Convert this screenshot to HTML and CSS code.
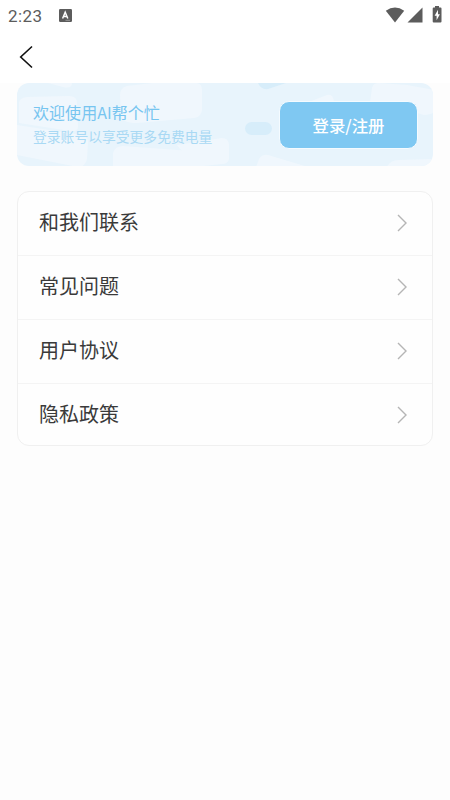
FILE: index.html
```html
<!DOCTYPE html>
<html lang="zh-CN">
<head>
<meta charset="utf-8">
<title>AI帮个忙</title>
<link rel="stylesheet" href="styles.css">
</head>
<body>
<div class="status">
  <span class="time">2:23</span>
  <svg class="app" width="13" height="13" viewBox="0 0 13 13"><rect width="13" height="13" rx="1.2" fill="#5c5c5c"/><path d="M3.6 9.5 6.2 3.2 8.8 9.5M4.5 7.5H8" fill="none" stroke="#fff" stroke-width="1.5"/><path d="M6.5 11.3H11" stroke="#aaa" stroke-width=".8"/></svg>
  <svg class="signals" width="58" height="18" viewBox="0 0 58 18"><path d="M.8 4.8Q10 -1.600 19.200 4.800L10 16.500Z" fill="#5c5c5c"/><path d="M37.500 1.500V16.500H22.500Z" fill="#5c5c5c"/><path d="M50 1.500V0H54V1.500H55.500Q56.500 1.500 56.500 2.500V15.500Q56.500 16.500 55.500 16.500H48.700Q47.700 16.500 47.700 15.500V2.500Q47.700 1.500 48.700 1.500Z" fill="#5c5c5c"/><path d="M53 3.800 49.600 9.800H51.600V14.300L54.900 8.300H53Z" fill="#fff"/></svg>
</div>
<header class="nav"><svg width="16" height="24" viewBox="0 0 16 24"><path d="M13 1.500 1.700 12 13 22.500" fill="none" stroke="#111" stroke-width="1.600"/></svg></header>
<main>
  <section class="banner">
    <svg class="pattern" width="417" height="84" viewBox="0 0 417 84">
      <g fill="#f0f7fd">
        <path d="M31 0H55Q55 6 46 4Z"/>
        <path d="M2 20Q2 15 10 14L52 13Q60 13 60 20L61 44Q61 49 53 48L2 40Z"/>
        <path d="M0 42 64 52Q71 53 71 59L70 76Q68 84 61 84L0 72Z"/>
        <path d="M103 12Q103 5 110 3L135 0H180Q185 1 185 7V27Q184 34 177 35L120 40Q105 40 104 32Z"/>
        <path d="M96 70Q98 63 106 63L174 68Q180 69 180 76V84H96Z"/>
        <path d="M160 62 205 55Q211 55 212 61V76Q211 81 205 81L178 84Z"/>
        <path d="M239 84 242 76Q245 71 251 72L291 84Z"/>
        <path d="M292 19 310 12Q316 10 317 19Z"/>
        <path d="M353 19 355 5Q356 0 362 0L390 2 417 7V29Q414 32 407 32L390 27Z"/>
        <path d="M370 84Q373 77 382 77L417 76V84Z"/>
      </g>
      <g fill="#d7edfa"><rect x="228" y="39" width="27" height="13" rx="6.500"/><path d="M241 0H269L251 6Q244 7 241 0Z"/></g>
    </svg>
    <div class="intro"><h1>欢迎使用AI帮个忙</h1><p>登录账号以享受更多免费电量</p></div>
    <button class="login">登录/注册</button>
  </section>
  <nav class="menu">
    <a class="row"><span>和我们联系</span><svg class="chev" viewBox="0 0 10 18"><path d="M1 1 9 9 1 17"/></svg></a>
    <a class="row"><span>常见问题</span><svg class="chev" viewBox="0 0 10 18"><path d="M1 1 9 9 1 17"/></svg></a>
    <a class="row"><span>用户协议</span><svg class="chev" viewBox="0 0 10 18"><path d="M1 1 9 9 1 17"/></svg></a>
    <a class="row"><span>隐私政策</span><svg class="chev" viewBox="0 0 10 18"><path d="M1 1 9 9 1 17"/></svg></a>
  </nav>
</main>
</body>
</html>
```
FILE: styles.css
```css
* { box-sizing: border-box; }
body { margin: 0; height: 800px; background: #fdfdfd; font-family: "Noto Sans CJK SC", sans-serif; overflow: hidden; }
.status { height: 31px; background: #fff; display: flex; align-items: flex-start; padding: 6px 7px 0 8px; }
.time { font: 17px/20px Roboto, sans-serif; color: #5c5c5c; width: 35px; letter-spacing: .4px; white-space: nowrap; }
.app { margin: 3px 0 0 16px; }
.signals { margin-left: auto; }
.nav { height: 52px; background: #fff; padding: 14px 0 0 19px; }
.nav svg { display: block; }
main { padding: 0 17px; }
.banner { position: relative; display: flex; align-items: flex-start; height: 83px; width: 416px; border-radius: 12px; overflow: hidden; background: #e8f4fc; }
.pattern { position: absolute; inset: 0; }
.intro { position: relative; padding: 17px 0 0 16px; width: 262px; white-space: nowrap; }
.intro h1 { margin: 0; font-size: 16px; line-height: 24px; font-weight: 400; color: #77c5f0; letter-spacing: .05px; }
.intro p { margin: 1px 0 0; font-size: 13.8px; line-height: 22px; color: #a9d9f4; }
.login { position: relative; margin: 18px 0 0; width: 139px; height: 48px; border: 1px solid #f5fbff; border-radius: 10px; padding: 0; background: #7fc8f2; color: #fff; font: 500 16.4px/24px "Noto Sans CJK SC", sans-serif; }
.menu { margin-top: 25px; width: 416px; height: 255px; border: 1px solid #f0f0f0; border-radius: 12px; background: #fefefe; }
.row { display: flex; justify-content: space-between; align-items: center; height: 64px; padding: 0 25px 1px 21px; border-bottom: 1px solid #f4f4f4; color: #3a3a3a; font-size: 20px; line-height: 30px; }
.row:last-child { height: 61px; padding-bottom: 0; border-bottom: 0; }
.row span { position: relative; top: -1px; }
.chev { width: 10px; height: 18px; fill: none; stroke: #b5b5b5; stroke-width: 1.400; }
```
